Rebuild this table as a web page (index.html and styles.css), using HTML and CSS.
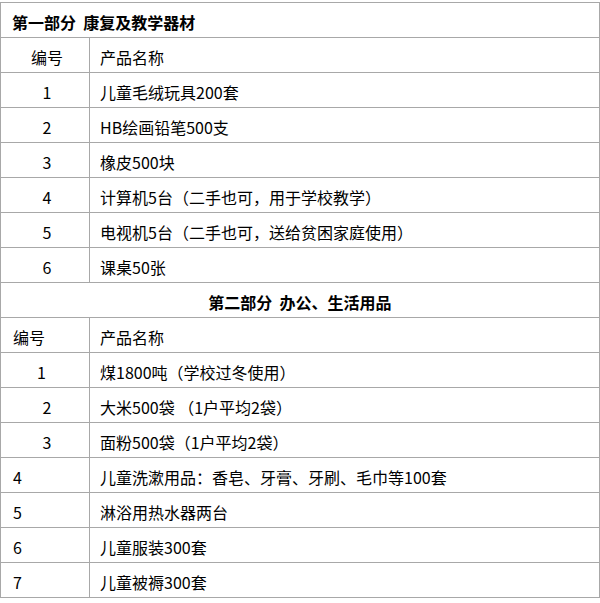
FILE: index.html
```html
<!DOCTYPE html>
<html lang="zh">
<head>
<meta charset="utf-8">
<link rel="stylesheet" href="styles.css">
</head>
<body>
<table class="list">
  <colgroup><col class="col-num"><col class="col-name"></colgroup>
  <tr><td colspan="2" class="sec sec-left">第一部分&nbsp; 康复及教学器材</td></tr>
  <tr><td class="num">编号</td><td class="name">产品名称</td></tr>
  <tr><td class="num">1</td><td class="name">儿童毛绒玩具200套</td></tr>
  <tr><td class="num">2</td><td class="name">HB绘画铅笔500支</td></tr>
  <tr><td class="num">3</td><td class="name">橡皮500块</td></tr>
  <tr><td class="num">4</td><td class="name">计算机5台（二手也可，用于学校教学）</td></tr>
  <tr><td class="num">5</td><td class="name">电视机5台（二手也可，送给贫困家庭使用）</td></tr>
  <tr><td class="num">6</td><td class="name">课桌50张</td></tr>
  <tr><td colspan="2" class="sec sec-center">第二部分&nbsp; 办公、生活用品</td></tr>
  <tr><td class="num-left">编号</td><td class="name">产品名称</td></tr>
  <tr><td class="num-mid">1</td><td class="name">煤1800吨（学校过冬使用）</td></tr>
  <tr><td class="num">2</td><td class="name">大米500袋 （1户平均2袋）</td></tr>
  <tr><td class="num">3</td><td class="name">面粉500袋（1户平均2袋）</td></tr>
  <tr><td class="num-left">4</td><td class="name">儿童洗漱用品：香皂、牙膏、牙刷、毛巾等100套</td></tr>
  <tr><td class="num-left">5</td><td class="name">淋浴用热水器两台</td></tr>
  <tr><td class="num-left">6</td><td class="name">儿童服装300套</td></tr>
  <tr><td class="num-left">7</td><td class="name">儿童被褥300套</td></tr>
</table>
</body>
</html>
```

FILE: styles.css
```css
html, body {
  margin: 0;
  padding: 0;
  background: #ffffff;
}

body {
  padding-top: 2px;
  font-family: "Noto Sans CJK SC", "DejaVu Sans", sans-serif;
  font-size: 16px;
  font-weight: 400;
  color: #000000;
}

.list {
  width: 600px;
  border-collapse: collapse;
  table-layout: fixed;
}

.col-num {
  width: 89px;
}

.list tr {
  height: 35px;
}

.list td {
  border: 1px solid #a8a8a8;
  padding: 3px 0 0 0;
  line-height: 20px;
  vertical-align: middle;
  white-space: nowrap;
  overflow: hidden;
}

.list td.sec {
  font-weight: 700;
}

.list td.sec-left {
  padding-left: 11px;
}

.list td.sec-center {
  text-align: center;
}

.list td.num {
  text-align: center;
  padding-left: 4px;
}

.list td.num-mid {
  text-align: left;
  padding-left: 36px;
}

.list td.num-left {
  text-align: left;
  padding-left: 12px;
}

.list td.name {
  padding-left: 10px;
}
```
